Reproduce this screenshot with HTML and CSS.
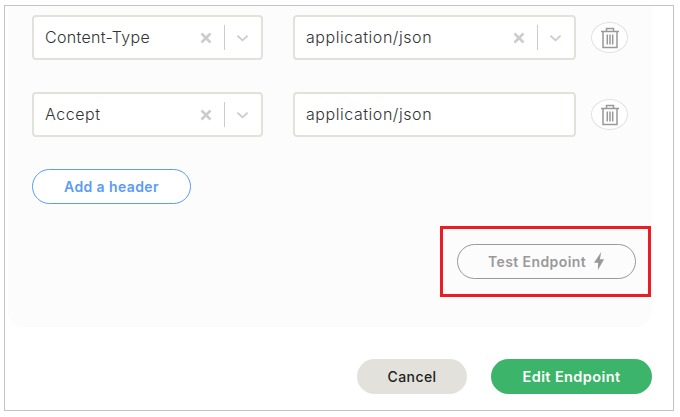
FILE: index.html
```html
<!DOCTYPE html>
<html lang="en">
<head>
    <meta charset="UTF-8">
    <title>Edit Endpoint</title>
    <link rel="stylesheet" href="styles.css">
</head>
<body>
    <div class="frame">
        <div class="panel">
            <div class="header-row">
                <div class="select name-field">
                    <span class="select-value">Content-Type</span>
                    <svg class="clear" viewBox="0 0 12 12"><path d="M1.5 1.5l9 9M10.5 1.5l-9 9"/></svg>
                    <span class="divider"></span>
                    <svg class="chevron" viewBox="0 0 14 8"><path d="M1.5 1.5L7 6.5l5.5-5"/></svg>
                </div>
                <div class="select value-field">
                    <span class="select-value wide">application/json</span>
                    <svg class="clear" viewBox="0 0 12 12"><path d="M1.5 1.5l9 9M10.5 1.5l-9 9"/></svg>
                    <span class="divider"></span>
                    <svg class="chevron" viewBox="0 0 14 8"><path d="M1.5 1.5L7 6.5l5.5-5"/></svg>
                </div>
                <button class="delete-btn">
                    <svg viewBox="0 0 20 22"><path d="M1 4.5h18M6.5 4V1.5h7V4M3 4.5v16h14v-16M7.3 7.5v10M10 7.5v10M12.7 7.5v10"/></svg>
                </button>
            </div>
            <div class="header-row">
                <div class="select name-field">
                    <span class="select-value wide">Accept</span>
                    <svg class="clear" viewBox="0 0 12 12"><path d="M1.5 1.5l9 9M10.5 1.5l-9 9"/></svg>
                    <span class="divider"></span>
                    <svg class="chevron" viewBox="0 0 14 8"><path d="M1.5 1.5L7 6.5l5.5-5"/></svg>
                </div>
                <div class="select value-field">
                    <span class="select-value wide">application/json</span>
                </div>
                <button class="delete-btn">
                    <svg viewBox="0 0 20 22"><path d="M1 4.5h18M6.5 4V1.5h7V4M3 4.5v16h14v-16M7.3 7.5v10M10 7.5v10M12.7 7.5v10"/></svg>
                </button>
            </div>
            <button class="pill add-btn">Add a header</button>
            <div class="test-row">
                <button class="pill test-btn"><span>Test Endpoint</span>
                    <svg viewBox="0 0 10 16"><path d="M7 0L0.5 9.5h3.7L4 16l5.5-9.5H5.8z"/></svg>
                </button>
            </div>
            <div class="highlight"></div>
        </div>
        <div class="footer">
            <button class="pill cancel-btn">Cancel</button>
            <button class="pill save-btn">Edit Endpoint</button>
        </div>
    </div>
</body>
</html>
```

FILE: styles.css
```css
body {
    margin: 0;
    background-color: #fff;
    font-family: 'Inter', 'Liberation Sans', sans-serif;
}
.frame {
    box-sizing: border-box;
    width: 670px;
    height: 406px;
    margin: 5px 0 0 4px;
    border: 1px solid #c4c4c4;
}
.panel {
    position: relative;
    box-sizing: border-box;
    width: 644px;
    height: 321px;
    margin-left: 3px;
    padding: 9px 0 0 24px;
    background-color: #fcfcfc;
    border-radius: 0 0 16px 16px;
}
.header-row {
    display: flex;
    align-items: center;
    margin-bottom: 32px;
}
.select {
    display: flex;
    align-items: center;
    box-sizing: border-box;
    height: 45px;
    padding: 0 10px 0 11px;
    background-color: #fff;
    border: 2px solid #e2e1dc;
    border-radius: 4px;
}
.name-field {
    width: 231px;
    margin-right: 30px;
}
.value-field {
    width: 283px;
    margin-right: 15px;
}
.select-value {
    flex: 1;
    margin-top: -1px;
    font-size: 16px;
    font-weight: 300;
    letter-spacing: 0.3px;
    color: #333;
}
.select-value.wide {
    letter-spacing: 0.55px;
}
.clear {
    width: 12px;
    height: 12px;
    fill: none;
    stroke: #ccc;
    stroke-width: 2.6;
}
.divider {
    width: 1px;
    height: 25px;
    margin: 0 11px 0 12px;
    background-color: #ccc;
}
.chevron {
    width: 13px;
    height: 8px;
    margin-right: 2px;
    fill: none;
    stroke: #ccc;
    stroke-width: 2;
}
.delete-btn {
    display: flex;
    align-items: center;
    justify-content: center;
    box-sizing: border-box;
    width: 37px;
    height: 31px;
    padding: 0;
    background-color: #fff;
    border: 1px solid #e2e1dc;
    border-radius: 50%;
}
.delete-btn svg {
    width: 20px;
    height: 22px;
    fill: none;
    stroke: #999;
    stroke-width: 1.5;
}
.pill {
    box-sizing: border-box;
    height: 35px;
    padding: 0 0 1px;
    font-family: inherit;
    font-size: 14px;
    font-weight: 600;
    letter-spacing: 0.4px;
    border-radius: 18px;
}
.add-btn {
    display: block;
    width: 159px;
    color: #5b9cf5;
    background-color: #fff;
    border: 1px solid #5b9cf5;
}
.test-row {
    display: flex;
    justify-content: flex-end;
    margin: 40px 16px 0 0;
}
.test-btn {
    display: flex;
    align-items: center;
    justify-content: center;
    gap: 7px;
    width: 179px;
    color: #999;
    background-color: #fcfcfc;
    border: 1px solid #999;
}
.test-btn svg {
    width: 12px;
    height: 18px;
    fill: #999;
}
.highlight {
    position: absolute;
    left: 432px;
    top: 220px;
    box-sizing: border-box;
    width: 211px;
    height: 71px;
    border: 3px solid #ed1c24;
}
.footer {
    display: flex;
    justify-content: flex-end;
    gap: 24px;
    width: 647px;
    margin-top: 32px;
}
.cancel-btn {
    width: 110px;
    font-weight: 500;
    color: #222;
    background-color: #e2e1dc;
    border: none;
}
.save-btn {
    width: 161px;
    font-size: 14.5px;
    color: #fff;
    background-color: #3cb46a;
    border: none;
}
```
